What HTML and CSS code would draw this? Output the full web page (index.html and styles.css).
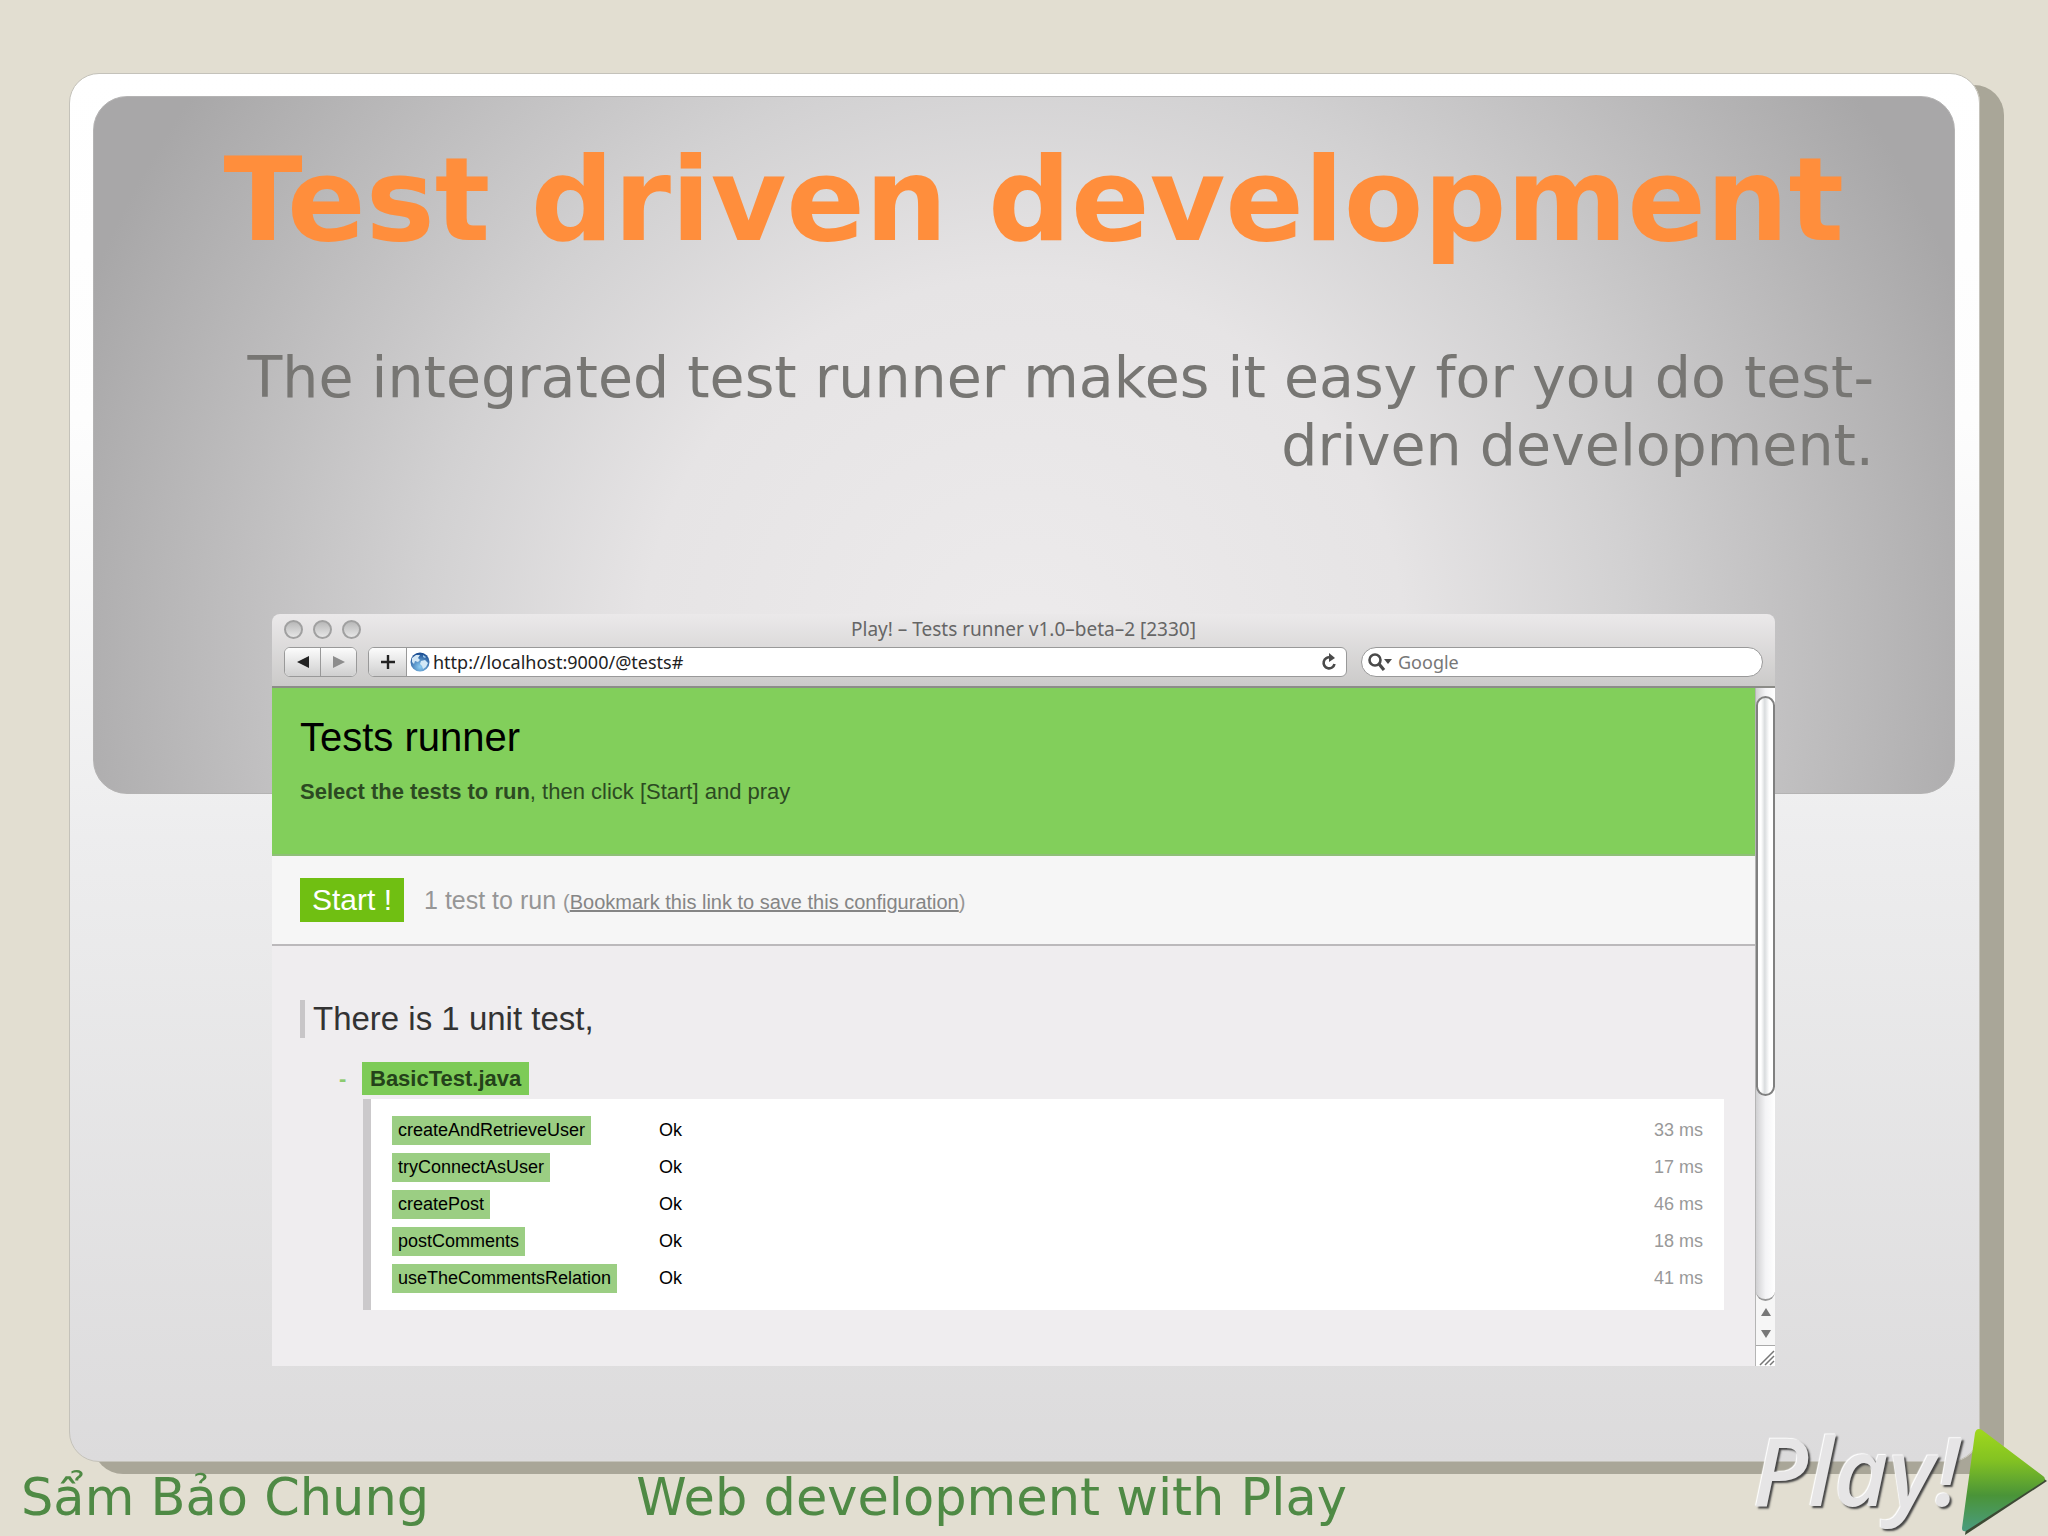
FILE: index.html
```
<!DOCTYPE html>
<html lang="en">
<head>
  <meta charset="UTF-8">
  <meta name="viewport" content="width=device-width, initial-scale=1.0">
  <title>Test driven development</title>
  <link rel="stylesheet" href="styles.css">
</head>
<body>

  <main class="slide">
    <header class="intro">
      <h1>Test driven development</h1>
      <p>The integrated test runner makes it easy for you do test-<br>driven development.</p>
    </header>

    <section class="browser">
      <div class="chrome">
        <div class="titlebar">
          <div class="lights"><i></i><i></i><i></i></div>
          <span class="window-title">Play! – Tests runner v1.0–beta–2 [2330]</span>
        </div>
        <div class="toolbar">
          <div class="nav">
            <button type="button" aria-label="Back">
              <svg width="12" height="12" viewBox="0 0 12 12"><path d="M12 0v12L0 6z" fill="#222"/></svg>
            </button>
            <button type="button" aria-label="Forward">
              <svg width="12" height="12" viewBox="0 0 12 12"><path d="M0 0v12l12-6z" fill="#8d8d8d"/></svg>
            </button>
          </div>
          <div class="address">
            <button type="button" aria-label="Add bookmark">
              <svg width="14" height="14" viewBox="0 0 14 14"><path d="M7 0v14M0 7h14" stroke="#222" stroke-width="2.4"/></svg>
            </button>
            <svg class="globe" width="20" height="20" viewBox="0 0 20 20">
              <defs>
                <radialGradient id="sea" cx="50%" cy="75%" r="70%">
                  <stop offset="0" stop-color="#8ccdf4"/>
                  <stop offset="1" stop-color="#1d4f94"/>
                </radialGradient>
              </defs>
              <circle cx="10" cy="10" r="9.5" fill="url(#sea)"/>
              <path d="M2 6l4-3 4 0-2 3 2 2-2 2-3-1-1 3-2-2z" fill="#d4e8f6"/>
              <path d="M11 9l4-1 3 3-2 4-3 2-1-3-2-2z" fill="#d2e8f7"/>
              <path d="M13 3l3 2-1 1-2-1z" fill="#9cc8e8"/>
            </svg>
            <input type="text" aria-label="Address" value="http://localhost:9000/@tests#">
            <button type="button" class="reload" aria-label="Reload">
              <svg width="16" height="18" viewBox="0 0 16 18"><path d="M13.500 11a5.500 5.500 0 1 1-4-6.500" fill="none" stroke="#4a4a4a" stroke-width="2.600"/><path d="M8 0l6 5-6 4z" fill="#4a4a4a"/></svg>
            </button>
          </div>
          <div class="search">
            <svg width="24" height="18" viewBox="0 0 24 18"><circle cx="7" cy="7" r="5.500" fill="none" stroke="#4a4a4a" stroke-width="2.600"/><path d="M11 11l5 6" stroke="#4a4a4a" stroke-width="3.200"/><path d="M16 6h8l-4 5z" fill="#4a4a4a"/></svg>
            <input type="text" aria-label="Search" placeholder="Google">
          </div>
        </div>
      </div>

      <div class="viewport">
        <div class="page">
          <div class="banner">
            <h2>Tests runner</h2>
            <p><strong>Select the tests to run</strong>, then click [Start] and pray</p>
          </div>
          <div class="actions">
            <button type="button" class="start">Start !</button>
            <p>1 test to run <small>(<a href="#">Bookmark this link to save this configuration</a>)</small></p>
          </div>
          <div class="tests">
            <h3>There is 1 unit test,</h3>
            <div class="suite"><span class="toggle">-</span><a href="#" class="suite-name">BasicTest.java</a></div>
            <table class="results">
              <tr><th scope="row"><span>createAndRetrieveUser</span></th><td>Ok</td><td class="time">33 ms</td></tr>
              <tr><th scope="row"><span>tryConnectAsUser</span></th><td>Ok</td><td class="time">17 ms</td></tr>
              <tr><th scope="row"><span>createPost</span></th><td>Ok</td><td class="time">46 ms</td></tr>
              <tr><th scope="row"><span>postComments</span></th><td>Ok</td><td class="time">18 ms</td></tr>
              <tr><th scope="row"><span>useTheCommentsRelation</span></th><td>Ok</td><td class="time">41 ms</td></tr>
            </table>
          </div>
        </div>
        <div class="scrollbar">
          <div class="track"><div class="thumb"></div></div>
          <div class="arrows">
            <svg width="10" height="8" viewBox="0 0 10 8"><path d="M5 0l5 8H0z" fill="#777"/></svg>
            <svg width="10" height="8" viewBox="0 0 10 8"><path d="M0 0h10L5 8z" fill="#777"/></svg>
          </div>
          <svg class="grip" width="20" height="20" viewBox="0 0 20 20"><path d="M4 19L18 5M9 19l9-9M14 19l4-4" stroke="#777" stroke-width="1.500"/></svg>
        </div>
      </div>
    </section>
  </main>

  <footer class="footer">
    <span>Sẩm Bảo Chung</span>
    <span>Web development with Play</span>
  </footer>

  <div class="logo">
    <span>Play!</span>
    <svg width="88" height="108" viewBox="0 0 88 108">
      <defs>
        <linearGradient id="arrow" x1="0" y1="0" x2="0" y2="1">
          <stop offset="0" stop-color="#a0d81c"/>
          <stop offset="0.300" stop-color="#84c322"/>
          <stop offset="0.650" stop-color="#4a9438"/>
          <stop offset="1" stop-color="#4a9c80"/>
        </linearGradient>
      </defs>
      <path d="M20 4L87 53 5 107z" fill="#3c4a34"/>
      <path d="M19 1Q16 1 15 5L2 100Q2 104 6 103L84 53Q86 50 83 48L22 2Q20 1 19 1z" fill="url(#arrow)"/>
    </svg>
  </div>

</body>
</html>
```
FILE: styles.css
```
* {
  box-sizing: border-box;
}

body {
  margin: 0;
  padding: 73px 68px 0 69px;
  min-height: 100vh;
  position: relative;
  overflow: hidden;
  background: #e2ded1;
  font-family: "DejaVu Sans", Verdana, sans-serif;
}

h1, h2, h3, p {
  margin: 0;
}

button, input {
  font: inherit;
  border: none;
  padding: 0;
  background: none;
}

.slide {
  padding: 22px 24px 95px 23px;
  border: 1px solid #c4c2ba;
  border-radius: 30px;
  background: linear-gradient(#fff 0%, #fdfdfd 25%, #ededee 55%, #dcdbdc 100%);
  box-shadow: 24px 12px 0 #a9a698;
}

.intro {
  height: 698px;
  padding: 28px 80px 0;
  border: 1px solid #b4b3b3;
  border-radius: 34px;
  background: radial-gradient(ellipse 57% 150% at 50% 80%, #edebec 0%, #e6e4e5 36%, #d2d1d2 57%, #bdbcbd 76%, #a8a7a8 95%);
  text-align: right;
}

.intro h1 {
  color: #ff8e3c;
  font-size: 116px;
  line-height: 150px;
  white-space: nowrap;
  padding-right: 30px;
}

.intro p {
  margin-top: 68px;
  color: #777673;
  font-size: 57px;
  line-height: 68px;
  white-space: nowrap;
}

/* browser window */

.browser {
  position: relative;
  margin: -180px 180px 0 179px;
  border-radius: 8px 8px 0 0;
  overflow: hidden;
}

.chrome {
  padding: 0 12px 9px;
  background: linear-gradient(#ebe9ea, #cbcac9);
  border-bottom: 2px solid #8c8c88;
}

.titlebar {
  display: grid;
  grid-template-columns: 1fr auto 1fr;
  align-items: center;
  height: 33px;
  padding-bottom: 3px;
  color: #666;
  font-family: "Noto Sans", sans-serif;
  font-size: 19px;
  line-height: 24px;
}

.lights {
  display: flex;
  gap: 10px;
}

.lights i {
  width: 19px;
  height: 19px;
  border: 2px solid #a0a0a0;
  border-radius: 50%;
  background: linear-gradient(#b9b9b9, #e6e6e6);
}

.toolbar {
  display: flex;
  height: 30px;
  font-family: "Noto Sans", sans-serif;
  font-size: 18px;
  line-height: 24px;
}

.nav, .address, .search {
  display: flex;
  align-items: center;
  border: 1px solid #999;
  border-radius: 6px;
  background: #fff;
  overflow: hidden;
}

.nav {
  width: 73px;
  margin-right: 11px;
}

.nav button, .address button {
  display: flex;
  align-items: center;
  justify-content: center;
  height: 100%;
  background: linear-gradient(#fcfcfc, #cfcfcf);
}

.nav button {
  flex: 1;
}

.nav button + button {
  border-left: 1px solid #999;
}

.address {
  flex: 1;
  margin-right: 14px;
}

.address button {
  width: 38px;
  border-right: 1px solid #999;
}

.address .reload {
  width: 34px;
  border: none;
  background: none;
}

.globe {
  margin: 0 3px;
}

.address input {
  flex: 1;
  color: #222;
}

.search {
  width: 402px;
  padding-left: 6px;
  gap: 6px;
  border-radius: 15px;
}

.search input {
  flex: 1;
}

.search input::placeholder {
  color: #777;
}

/* page inside the window */

.viewport {
  display: flex;
  font-family: "Liberation Sans", Arial, sans-serif;
}

.page {
  flex: 1;
  background: #efedef;
}

.banner {
  height: 168px;
  padding: 27px 28px 0;
  background: #82cf5b;
  border-bottom: 2px solid #8fbf78;
}

.banner h2 {
  font-size: 40px;
  font-weight: normal;
  line-height: 44px;
}

.banner p {
  margin-top: 20px;
  color: #2c4a22;
  font-size: 22px;
  line-height: 26px;
}

.actions {
  display: flex;
  align-items: center;
  gap: 20px;
  height: 90px;
  padding: 0 28px;
  background: #f6f6f6;
  border-bottom: 2px solid #bbb9bb;
  color: #969696;
  font-size: 25px;
}

.start {
  height: 44px;
  padding: 0 12px;
  background: #70bf12;
  color: #fff;
  font-size: 30px;
}

.actions small {
  font-size: 20px;
}

.actions a {
  color: #858585;
}

.tests {
  padding: 54px 31px 56px 28px;
}

.tests h3 {
  border-left: 5px solid #c8c6c8;
  padding-left: 8px;
  color: #333;
  font-size: 33px;
  font-weight: normal;
  line-height: 38px;
}

.suite {
  display: flex;
  align-items: center;
  margin: 24px 0 4px 39px;
  font-size: 22px;
  font-weight: bold;
}

.toggle {
  width: 23px;
  color: #8ccb70;
}

.suite-name {
  padding: 0 8px;
  background: #7dcb57;
  color: #24421a;
  line-height: 33px;
  text-decoration: none;
}

.results {
  width: calc(100% - 63px);
  margin-left: 63px;
  padding: 13px 21px 13px 21px;
  border-left: 8px solid #cbc9cb;
  border-spacing: 0;
  background: #fff;
  font-size: 18px;
}

.results th, .results td {
  height: 37px;
  padding: 0;
  font-weight: normal;
  text-align: left;
}

.results th {
  width: 267px;
}

.results th span {
  display: inline-block;
  padding: 0 6px;
  background: #9bce83;
  line-height: 29px;
}

.results .time {
  color: #999;
  text-align: right;
}

.scrollbar {
  display: flex;
  flex-direction: column;
  width: 20px;
  border-left: 1px solid #b5b5b5;
  background: #f6f6f6;
}

.track {
  flex: 1;
  padding-top: 8px;
  border-radius: 0 0 10px 10px;
  border-bottom: 2px solid #999;
  background: linear-gradient(90deg, #d0d0d2, #f4f4f6 50%, #fff);
}

.thumb {
  height: 400px;
  border: 2px solid #808080;
  border-radius: 10px;
  background: linear-gradient(90deg, #fff 20%, #d9dcde 45%, #fff 75%);
}

.arrows {
  display: flex;
  flex-direction: column;
  align-items: center;
  justify-content: space-around;
  height: 45px;
  border-bottom: 1px solid #aaa;
}

.grip {
  background: #fff;
}

.footer {
  display: flex;
  gap: 207px;
  margin-left: -48px;
  color: #4f8a45;
  font-size: 51px;
  line-height: 60px;
  padding-top: 6px;
  white-space: nowrap;
}

/* logo lies over the corner of the slide */

.logo {
  position: absolute;
  right: 0;
  bottom: 0;
  display: flex;
  align-items: flex-end;
}

.logo span {
  color: #e6e5e6;
  font-family: "Open Sans", sans-serif;
  font-size: 94px;
  font-style: italic;
  font-weight: 600;
  line-height: 132px;
  text-shadow: 2px 2px 2px #444, -1px -1px 1px #fff;
}
```
